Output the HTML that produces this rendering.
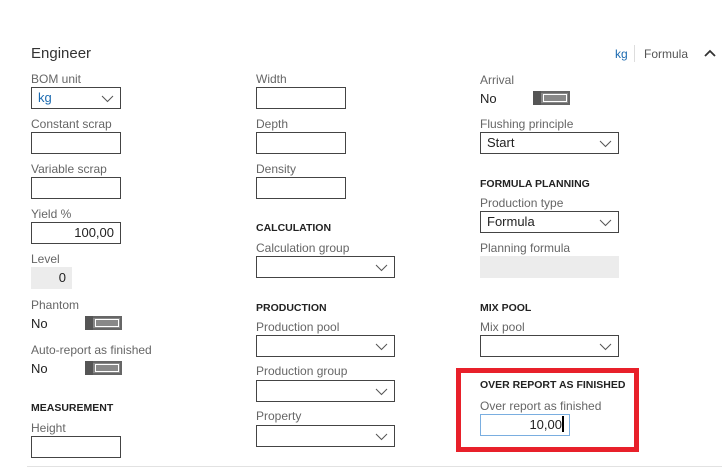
<!DOCTYPE html>
<html><head><style>
body{margin:0;width:722px;height:473px;background:#fff;position:relative;overflow:hidden;font-family:"Liberation Sans",sans-serif;}
.a{position:absolute;white-space:nowrap;}
.l{font-size:12px;color:#666;}
.h{font-size:10.5px;font-weight:bold;color:#222;}
.v{font-size:13px;color:#222;}
.b{position:absolute;border:1px solid #444;box-sizing:border-box;height:22px;background:#fff;font-size:13px;color:#222;line-height:20px;}
.dd svg{position:absolute;right:6px;top:7px;}
.t{position:absolute;width:37px;height:14px;border:2px solid #666;box-sizing:border-box;background:#888;}
.t:before{content:"";position:absolute;left:-2px;top:-2px;width:8px;height:14px;background:#555;}
.t:after{content:"";position:absolute;left:8px;top:1px;right:1px;bottom:1px;border:1px solid #fff;}
</style></head><body>
<div class="a" style="left:31px;top:45px;font-size:15px;color:#333">Engineer</div>
<div class="a" style="left:615px;top:47px;font-size:12px;color:#1b6ab0">kg</div>
<div class="a" style="left:634px;top:45px;width:1px;height:17px;background:#ddd"></div>
<div class="a" style="left:644px;top:47px;font-size:12px;color:#555">Formula</div>
<svg class="a" style="left:704px;top:49px" width="12" height="8"><path d="M1 7 L6 2 L11 7" stroke="#333" stroke-width="1.8" fill="none"/></svg>

<!-- col1 -->
<div class="a l" style="left:31px;top:72px">BOM unit</div>
<div class="b dd" style="left:31px;top:87px;width:90px;color:#1b6ab0;padding-left:6px">kg<svg width="13" height="8"><path d="M1 1 L6.5 6.5 L12 1" stroke="#555" fill="none"/></svg></div>
<div class="a l" style="left:31px;top:117px">Constant scrap</div>
<div class="b" style="left:31px;top:132px;width:90px"></div>
<div class="a l" style="left:31px;top:162px">Variable scrap</div>
<div class="b" style="left:31px;top:177px;width:90px"></div>
<div class="a l" style="left:31px;top:207px">Yield %</div>
<div class="b" style="left:31px;top:222px;width:90px;text-align:right;padding-right:6px">100,00</div>
<div class="a l" style="left:31px;top:252px">Level</div>
<div class="b" style="left:31px;top:267px;width:41px;border:none;background:#ececec;text-align:right;padding-right:6px;line-height:22px">0</div>
<div class="a l" style="left:31px;top:298px">Phantom</div>
<div class="a v" style="left:31px;top:316px">No</div>
<div class="t" style="left:85px;top:316px"></div>
<div class="a l" style="left:31px;top:343px">Auto-report as finished</div>
<div class="a v" style="left:31px;top:361px">No</div>
<div class="t" style="left:85px;top:361px"></div>
<div class="a h" style="left:31px;top:402px">MEASUREMENT</div>
<div class="a l" style="left:31px;top:421px">Height</div>
<div class="b" style="left:31px;top:436px;width:90px"></div>

<!-- col2 -->
<div class="a l" style="left:256px;top:72px">Width</div>
<div class="b" style="left:256px;top:87px;width:90px"></div>
<div class="a l" style="left:256px;top:117px">Depth</div>
<div class="b" style="left:256px;top:132px;width:90px"></div>
<div class="a l" style="left:256px;top:162px">Density</div>
<div class="b" style="left:256px;top:177px;width:90px"></div>
<div class="a h" style="left:256px;top:222px">CALCULATION</div>
<div class="a l" style="left:256px;top:241px">Calculation group</div>
<div class="b dd" style="left:256px;top:256px;width:139px"><svg width="13" height="8"><path d="M1 1 L6.5 6.5 L12 1" stroke="#555" fill="none"/></svg></div>
<div class="a h" style="left:256px;top:302px">PRODUCTION</div>
<div class="a l" style="left:256px;top:320px">Production pool</div>
<div class="b dd" style="left:256px;top:335px;width:139px"><svg width="13" height="8"><path d="M1 1 L6.5 6.5 L12 1" stroke="#555" fill="none"/></svg></div>
<div class="a l" style="left:256px;top:364px">Production group</div>
<div class="b dd" style="left:256px;top:380px;width:139px"><svg width="13" height="8"><path d="M1 1 L6.5 6.5 L12 1" stroke="#555" fill="none"/></svg></div>
<div class="a l" style="left:256px;top:409px">Property</div>
<div class="b dd" style="left:256px;top:425px;width:139px"><svg width="13" height="8"><path d="M1 1 L6.5 6.5 L12 1" stroke="#555" fill="none"/></svg></div>

<!-- col3 -->
<div class="a l" style="left:480px;top:73px">Arrival</div>
<div class="a v" style="left:480px;top:91px">No</div>
<div class="t" style="left:533px;top:91px"></div>
<div class="a l" style="left:480px;top:117px">Flushing principle</div>
<div class="b dd" style="left:480px;top:132px;width:139px;padding-left:6px">Start<svg width="13" height="8"><path d="M1 1 L6.5 6.5 L12 1" stroke="#555" fill="none"/></svg></div>
<div class="a h" style="left:480px;top:178px">FORMULA PLANNING</div>
<div class="a l" style="left:480px;top:196px">Production type</div>
<div class="b dd" style="left:480px;top:211px;width:139px;padding-left:6px">Formula<svg width="13" height="8"><path d="M1 1 L6.5 6.5 L12 1" stroke="#555" fill="none"/></svg></div>
<div class="a l" style="left:480px;top:241px">Planning formula</div>
<div class="b" style="left:480px;top:256px;width:139px;border:none;background:#ececec"></div>
<div class="a h" style="left:480px;top:302px">MIX POOL</div>
<div class="a l" style="left:480px;top:320px">Mix pool</div>
<div class="b dd" style="left:480px;top:335px;width:139px"><svg width="13" height="8"><path d="M1 1 L6.5 6.5 L12 1" stroke="#555" fill="none"/></svg></div>

<div class="a" style="left:456px;top:368px;width:183px;height:84px;border:5px solid #e8202a;box-sizing:border-box"></div>
<div class="a h" style="left:480px;top:379px">OVER REPORT AS FINISHED</div>
<div class="a l" style="left:480px;top:399px">Over report as finished</div>
<div class="b" style="left:480px;top:414px;width:90px;border-color:#7aaee0;text-align:right;padding-right:5px">10,00<span style="display:inline-block;width:2px;height:16px;background:#000;vertical-align:-3px"></span></div>

<div class="a" style="left:27px;top:466px;width:695px;height:1px;background:#e2e2e2"></div>
</body></html>
